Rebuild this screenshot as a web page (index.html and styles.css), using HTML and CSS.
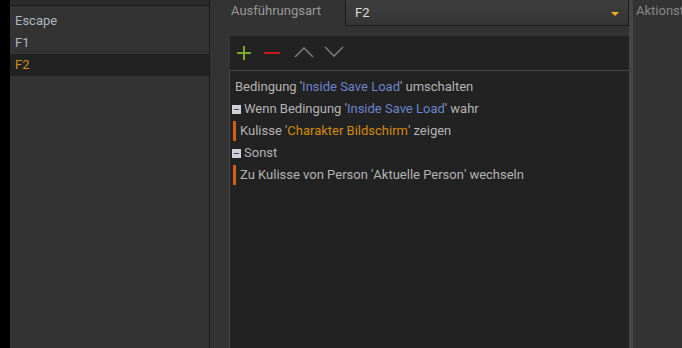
FILE: index.html
```html
<!DOCTYPE html>
<html lang="de">
<head>
    <meta charset="UTF-8">
    <title>Tastenaktionen</title>
    <link rel="stylesheet" href="styles.css">
</head>
<body>

<div class="edge"></div>

<aside class="keys">
    <div class="keys-top"></div>
    <ul class="key-list">
        <li>Escape</li>
        <li>F1</li>
        <li class="active">F2</li>
    </ul>
</aside>

<main class="main">
    <div class="mode-row">
        <span class="mode-label">Ausführungsart</span>
        <div class="select">
            <span>F2</span>
            <span class="caret"></span>
        </div>
    </div>

    <section class="editor">
        <div class="toolbar">
            <svg width="16" height="16" viewBox="0 0 16 16"><path d="M8 1v14M1 8h14" stroke="#79a928" stroke-width="2"/></svg>
            <svg width="16" height="16" viewBox="0 0 16 16"><path d="M0 8h16" stroke="#cc1414" stroke-width="2"/></svg>
            <svg width="20" height="12" viewBox="0 0 20 12"><path d="M1 11l9-9 9 9" fill="none" stroke="#777" stroke-width="1.6"/></svg>
            <svg width="20" height="12" viewBox="0 0 20 12"><path d="M1 1l9 9 9-9" fill="none" stroke="#777" stroke-width="1.6"/></svg>
        </div>
        <div class="actions">
            <div class="row">Bedingung '<span class="blue">Inside Save Load</span>' umschalten</div>
            <div class="row"><span class="fold"></span>Wenn Bedingung '<span class="blue">Inside Save Load</span>' wahr</div>
            <div class="row child">Kulisse '<span class="gold">Charakter Bildschirm</span>' zeigen</div>
            <div class="row"><span class="fold"></span>Sonst</div>
            <div class="row child">Zu Kulisse von Person '<span class="plain">Aktuelle Person</span>' wechseln</div>
        </div>
    </section>
</main>

<div class="divider"></div>

<aside class="side">
    <span class="side-title">Aktionsteuerung</span>
</aside>

</body>
</html>
```

FILE: styles.css
```css
html, body {
    height: 100%;
}
body {
    margin: 0;
    display: flex;
    background-color: #333;
    font-family: Roboto, "Liberation Sans", sans-serif;
    font-size: 13px;
    color: #b4b4b4;
    overflow: hidden;
}
.edge {
    width: 10px;
    background-color: #000;
}
.keys {
    width: 199px;
    border-right: 1px solid #1b1b1b;
    background-color: #333;
}
.keys-top {
    height: 5px;
    background-color: #2b2b2b;
    border-bottom: 1px solid #1b1b1b;
}
.key-list {
    list-style: none;
    margin: 4px 0 0;
    padding: 0;
}
.key-list li {
    height: 22px;
    line-height: 22px;
    padding-left: 5px;
    color: #aeb8c2;
}
.key-list li.active {
    background-color: #222;
    color: #d0901a;
}
.main {
    width: 400px;
    padding-left: 19px;
    display: flex;
    flex-direction: column;
}
.mode-row {
    display: flex;
    height: 26px;
    margin-bottom: 10px;
}
.mode-label {
    width: 114px;
    padding-left: 2px;
    line-height: 22px;
    color: #999;
}
.select {
    width: 264px;
    height: 25px;
    border: 1px solid #1c1c1c;
    border-top: none;
    background: linear-gradient(#3e3e3e, #353535);
    display: flex;
    align-items: center;
    justify-content: space-between;
    padding: 0 9px 0 9px;
    color: #ddd;
}
.caret {
    width: 0;
    height: 0;
    margin-top: 2px;
    border-left: 4px solid transparent;
    border-right: 4px solid transparent;
    border-top: 4px solid #f2b01e;
}
.editor {
    flex: 1;
    display: flex;
    flex-direction: column;
}
.toolbar {
    height: 34px;
    background-color: #222;
    margin-left: 1px;
    display: flex;
    align-items: center;
    gap: 12px;
    padding-left: 6px;
}
.toolbar svg:nth-child(3) {
    margin-left: 2px;
    margin-top: -3px;
}
.toolbar svg:nth-child(4) {
    margin-left: -2px;
    margin-top: -3px;
}
.actions {
    flex: 1;
    background-color: #222;
    border-top: 1px solid #474747;
    border-left: 1px solid #474747;
    padding: 5px 0 0 2px;
}
.row {
    height: 22px;
    line-height: 22px;
    display: flex;
    align-items: center;
    padding-left: 3px;
    white-space: pre;
}
.fold {
    width: 9px;
    height: 9px;
    margin-left: -3px;
    margin-right: 3px;
    background: linear-gradient(#445, #445) center / 5px 1px no-repeat, #cfd0d8;
}
.row.child {
    padding-left: 1px;
}
.row.child::before {
    content: "";
    width: 3px;
    height: 20px;
    margin-right: 4px;
    background-color: #d0600e;
}
.blue {
    color: #6c84cc;
}
.gold {
    color: #d08c0c;
}
.plain {
    color: #b4b4b4;
}
.divider {
    width: 4px;
    background-color: #454545;
}
.side {
    flex: 1;
    overflow: hidden;
    white-space: nowrap;
    padding-left: 3px;
}
.side-title {
    line-height: 22px;
    color: #888;
}
```
